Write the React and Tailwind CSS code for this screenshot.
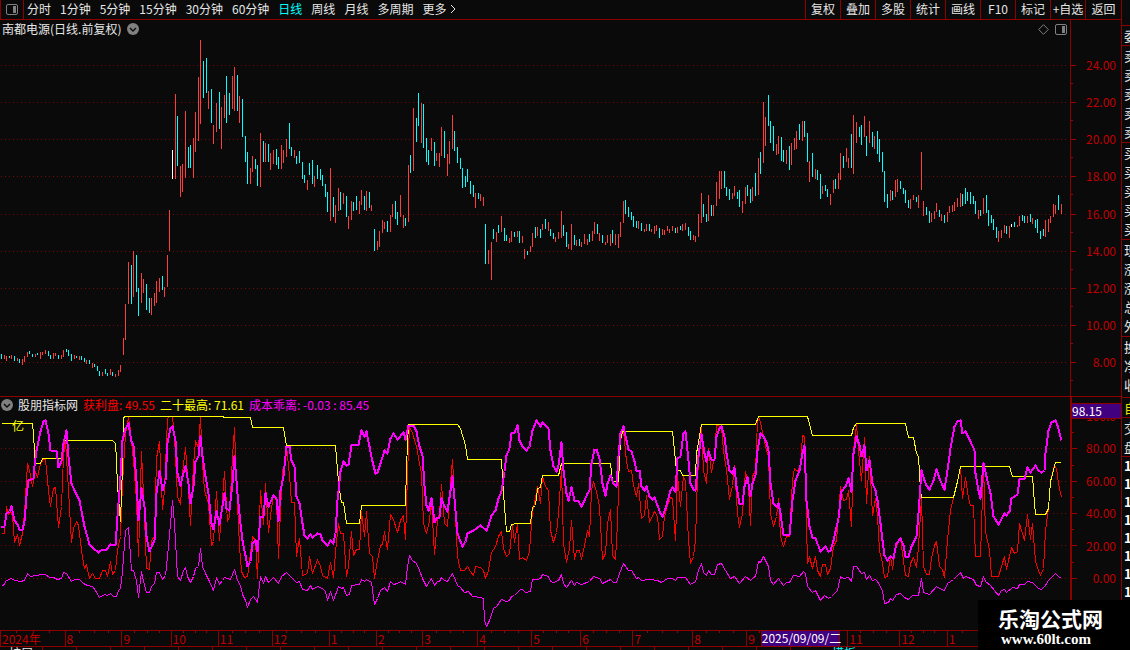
import { useState } from "react";

const PERIODS = ["分时", "1分钟", "5分钟", "15分钟", "30分钟", "60分钟", "日线", "周线", "月线", "多周期"];
const TOOLS = ["复权", "叠加", "多股", "统计", "画线", "F10", "标记", "+自选"];
const PRICES = ["24.00", "22.00", "20.00", "18.00", "16.00", "14.00", "12.00", "10.00", "8.00"];
const LEVELS = ["100.0", "80.00", "60.00", "40.00", "20.00", "0.00"];

const PRICE_ROWS = [65, 102, 139, 176, 214, 251, 288, 325, 362];
const LEVEL_ROWS = [448, 481, 513, 545, 578];

// label and the x where the month starts
const MONTHS = [
  ["2024年", 0], ["8", 65], ["9", 122], ["10", 171], ["11", 218], ["12", 272], ["1", 329],
  ["2", 376], ["3", 422], ["4", 477], ["5", 531], ["6", 580], ["7", 632], ["8", 692],
  ["9", 746], ["", 796], ["11", 847], ["12", 899], ["1", 946], ["", 1010],
];
const AXIS_END = 1070;

const TABS = [
  "窗口", "MACD", "DMI", "DMA", "FSL", "TRIX", "BRAR", "CR", "VR", "OBV", "ASI", "EMV", "VOL",
  "RSI", "WR", "SAR", "KDJ", "CCI", "ROC", "MTM", "BOLL", "PSY", "MCST",
];

// x, u/d/w (up, down, flat), high-low
const CANDLES = `
1d354-359 4u355-359 6u356-361 9d356-358 11u355-359 14d356-361 17u358-361 19d359-363 22u359-365 24u356-362
27u352-357 29d351-354 32d354-357 35u354-357 37d353-355 40u352-359 42u352-355 45u350-354 48d351-356 50d355-359
53u353-359 55u353-356 58d355-359 61u355-359 63u350-357 66d349-352 68d350-356 71d354-361 74u355-359 76d356-358
79u356-360 81d356-360 84d358-362 86u360-364 89d360-364 92u363-368 94d364-367 97d366-371 99d371-376 102u372-376
105d369-374 107d373-376 110u369-375 112d372-376 115u374-377 118u370-376 120u365-372 123u338-355 125u304-340
128u262-304 131d265-304 133u251-297 136d255-292 138d288-316 141u273-303 143u279-293 146d284-310 149d298-313
151u298-315 154u293-306 156u281-303 159u278-292 162d276-290 164u287-297 167u255-287 169u210-251 172w150-179
175u94-179 177d116-166 180u166-197 182u164-192 185u111-178 188d147-168 190d145-168 193u138-178 195u112-152
198u77-141 200u40-124 203d61-98 206d58-93 208u91-109 211d89-123 213u125-144 216u103-132 219d92-129 221u107-149
224u95-118 226d76-123 229d93-115 232u76-109 234u67-111 237d75-111 239u96-123 242d99-137 245d136-162 247d152-184
250u168-184 252u156-172 255d159-169 257d165-186 260u133-187 263d141-162 265u143-162 268d144-162 270u153-170
273u150-164 276d149-165 278d157-169 281u145-169 283u150-163 286u139-157 289d123-149 291d147-156 294u150-158
296d156-164 299d151-163 302d162-179 304d175-183 307u180-190 309d163-175 312d160-184 314u176-187 317d165-179
320d169-180 322d175-186 325d184-197 327d192-212 330u168-221 333d197-217 335u205-223 338u188-211 340d192-210
343u193-204 346d196-217 348u216-229 351u201-220 353d202-211 356d196-210 359u201-214 361u190-205 364d196-210
366u191-211 369d192-208 371u205-211 374d229-251 377u241-250 379u231-247 382u220-233 384u222-229 387d221-232
390u215-232 392u204-217 395d201-219 397d212-225 400u195-217 403u215-228 405d218-226 408u165-222 410d155-173
413u108-171 416d118-142 418d93-126 421u103-143 423d104-148 426d138-162 428d150-165 431u138-151 434d142-166
436u153-161 439u153-167 441u127-156 444d131-158 447u154-176 449u141-164 452u115-149 454d131-151 457d147-163
460d158-169 462d168-188 465d176-187 467d169-182 470d181-194 473d185-197 475u193-208 478d193-199 480u194-201
483u197-206 485d224-264 488u250-264 491u242-280 493d229-239 496u232-242 498d225-233 501u216-232 504d228-241
506d235-241 509u238-243 511u231-242 514d232-237 517u231-237 519d231-243 522u236-243 524u249-259 527d251-255
530u246-252 532u233-247 535d227-238 537u227-236 540d229-238 542u224-230 545d219-229 548u222-231 550d229-236
553d233-239 555u237-242 558u232-239 561u211-238 563d225-236 566d232-247 568u244-249 571u224-250 574d235-245
576u240-246 579d239-246 581u242-247 584u234-244 587u239-245 589d234-242 592u231-241 594u222-234 597d224-234
599u233-241 602d235-243 605u242-245 607u235-243 610u234-246 612d230-243 615u234-245 618u234-248 620u222-237
623u201-223 625d200-214 628d207-217 631d212-220 633d216-227 636d221-228 638u221-229 641d223-231 644u229-232
646u224-231 649d224-231 651u229-232 654u226-234 656u225-231 659d228-238 662u229-235 664u230-235 667u226-231
669u229-233 672u226-231 675d228-233 677u227-233 680d226-230 682u224-231 685u223-230 688d227-236 690d231-240
693u235-240 695u236-242 698u214-237 701u193-223 703d204-217 706d214-222 708u195-221 711d205-216 713u205-216
716u182-206 719u171-199 721u171-189 724d171-188 726d187-196 729d189-200 732u193-199 734u186-196 737d192-199
739d190-207 742u201-213 745u187-204 747d185-196 750d189-203 752u187-201 755d173-196 758u158-195 760d152-174
763u102-163 765u117-146 768d95-126 770d121-143 773d126-151 776u144-155 778u136-154 781d137-161 783d150-162
786u150-164 789d146-170 791u143-165 794u138-150 796u131-149 799d124-140 802u121-141 804d121-137 807d133-162
809u161-182 812d153-177 815u169-179 817d170-180 820d174-199 822u186-194 825d185-191 827d189-197 830u194-205
833u180-193 835d179-189 838u173-189 840u153-180 843d156-168 846u148-162 848u158-168 851d134-168 853u115-174
856u122-143 859d127-137 861d125-145 864u116-137 866d136-156 869u121-143 872d132-147 874u136-149 877d131-154
879d139-162 882d152-172 884d171-202 887d194-208 890u190-201 892d191-200 895u180-197 897u179-192 900d181-189
903d188-194 905d190-203 908d200-208 910u199-209 913u195-200 916d197-202 918u195-208 921u152-190 923u201-216
926d207-215 929d211-223 931u213-222 934u211-219 936u203-212 939d210-217 941u214-221 944d215-223 947u212-222
949u206-213 952u205-212 954u202-211 957u198-207 960u193-207 962d194-206 965d188-204 967d192-201 970d192-204
973d196-204 975d201-214 978u210-219 980d210-216 983u198-214 986d195-213 988d210-226 991d215-223 993d219-230
996d227-238 998u231-242 1001u230-238 1004u225-233 1006d226-234 1009u226-238 1011w224-227 1014d222-227
1017u225-227 1019u216-226 1022d215-221 1024d216-223 1027u216-223 1030d214-222 1032u218-224 1035d220-228
1037d219-233 1040d231-239 1043d229-236 1045u220-237 1048u219-232 1050u216-223 1053u204-217 1055u205-214
1058d195-210 1061u204-214`
  .trim()
  .split(/\s+/)
  .map((item) => {
    const [, x, kind, top, bottom] = item.match(/(\d+)([udw])(\d+)-(\d+)/);
    return { x: Number(x), kind, top: Number(top), bottom: Number(bottom) };
  });

const CANDLE_FILL = { u: "fill-[#ff3c3c]", d: "fill-[#00ffff]", w: "fill-white" };

// The indicator lines are kept in blocks: [first x of the block, points],
// with the points in thirds of a unit and y counted from 390.
const HIGHEST = [
  [0, "4,100 97,100 100,130 104,185 106,220 121,220 127,205 184,205 190,152 338,152 346,160 349,210 353,290 361,395 366,230 370,85 374,79 668,79 672,82 750,82 757,112 780,112"],
  [260, "70,112 80,166 226,166 236,275 241,320 243,337 250,337 260,400 298,400 305,346 436,346 440,230 445,103 593,103 602,115 615,165 622,208 724,208 728,265 732,350 739,424 748,424 755,404 768,400"],
  [520, "31,400 36,352 46,345 53,295 61,293 67,256 115,256 125,220 271,220 277,275 295,275 300,150 307,125 457,125 463,180 469,240 480,242 487,256 526,256 530,190 544,103 707,103 715,79"],
  [780, "82,79 97,136 214,136 220,112 229,100 376,100 386,142 400,143 408,190 415,200 421,300 424,322 520,322 533,275 541,230 688,230 696,259 757,259 763,340 767,373 797,373 804,355 812,275 825,218 842,217"],
];

const PROFIT = [
  [0, "4,430 13,430 19,350 25,372 31,365 37,375 43,458 52,432 58,465 67,430 73,370 82,220 88,242 97,290 106,243 112,262 121,220 130,208 136,208 145,300 151,350 160,295 166,292 175,412 184,350 190,200 197,152 205,300 214,458 220,415 229,395 235,405 244,480 253,535 259,522 268,565 277,550 286,565 298,565 307,540 316,540 322,558 331,515 338,552 346,540 353,480 361,440 367,280 376,130 385,82 391,120 400,210 408,330 415,500 424,185 432,380 438,535 447,538 454,450 463,440 469,205 477,155 487,358 493,300 502,85 508,80 517,80 524,140 532,320 541,342 548,250 556,172 564,300 571,405 580,225 587,150 595,175 601,80 608,220 612,300 625,340 634,465 640,455 649,305 658,450 666,325 673,245 681,395 688,380 697,200 703,112 710,280 718,470 725,545 734,562 742,560 750,490 757,440 765,450 772,565 781,300"],
  [260, "10,403 16,280 25,427 34,355 40,312 48,330 55,505 60,360 66,240 72,230 80,170 88,255 94,337 103,338 109,500 118,445 127,555 142,550 149,498 157,550 172,507 181,528 187,555 202,565 211,517 220,562 229,455 235,400 242,430 250,430 259,560 266,530 274,425 281,495 290,477 298,478 305,365 313,438 320,365 328,490 336,500 344,565 352,510 360,465 367,462 374,425 382,478 391,373 400,388 413,427 422,390 430,377 437,448 441,250 447,110 458,130 470,170 478,220 485,250 491,400 500,430 508,390 515,330 523,493 531,390 538,370 544,283 553,400 562,408 570,280 578,208 585,380 593,500 602,540 614,540 622,528 632,545 640,555 647,528 662,532 670,540 677,565 685,540 694,488 707,470 716,440 724,425 731,475 740,500 747,490 757,405 764,458 772,403 779,508"],
  [520, "7,502 20,512 29,485 36,360 44,340 52,290 61,340 68,260 75,290 85,300 92,420 100,457 109,428 116,370 124,235 131,460 140,518 147,475 154,390 163,508 170,482 178,482 185,507 194,465 203,420 208,438 214,300 221,275 229,305 238,350 248,508 255,490 262,400 271,358 277,495 286,508 292,400 298,200 305,130 310,122 319,215 325,245 334,240 341,285 349,320 356,280 365,385 373,375 380,315 389,397 404,365 412,380 419,447 427,440 434,380 443,345 450,322 457,325 466,450 473,255 481,350 489,260 496,275 504,450 512,520 520,500 527,450 533,260 543,105 551,240 559,280 566,175 575,248 582,200 590,105 603,108 610,180 619,240 628,328 636,285 643,225 651,370 659,412 668,370 677,245 684,290 691,405 698,260 706,240 713,90 718,85 730,140 738,180 745,200 752,370 760,408 768,380 775,325"],
  [780, "2,440 10,470 20,440 29,440 36,270 44,235 52,245 60,225 68,137 74,138 79,400 83,520 89,500 97,535 105,500 113,540 121,558 128,523 136,523 143,552 151,535 160,470 168,450 175,380 182,290 190,330 199,328 206,300 214,410 221,180 229,102 236,180 244,272 254,143 260,340 268,198 278,375 285,325 291,380 299,480 307,520 314,562 321,558 330,500 338,538 346,475 354,450 361,445 368,490 376,555 384,558 392,520 400,503 409,533 415,470 424,325 431,530 440,552 447,552 455,505 462,465 469,455 477,530 486,538 494,562 502,450 512,360 525,300 533,275 541,230 548,325 556,262 565,325 572,345 580,345 586,498 602,500 610,225 617,425 627,480 634,560 655,560 663,530 672,500 680,538 695,472 703,490 712,485 719,400 727,430 733,450 742,373 751,448 758,400 766,515 774,540 782,555 790,535 797,420 806,355 812,275 822,225 830,235 836,280 844,322"],
];

const TREND = [
  [0, "4,411 13,410 19,370 28,365 34,350 43,392 52,402 58,418 67,418 73,395 79,320 85,272 99,265 104,230 110,180 121,125 130,95 136,92 145,130 150,180 168,180 176,232 185,215 190,160 199,120 206,200 214,280 222,300 238,330 246,380 254,410 268,462 280,475 296,488 307,478 320,478 331,463 345,467 352,380 360,260 368,150 376,115 385,100 393,155 401,165 408,270 415,392 425,295 432,350 440,440 448,485 456,462 463,450 470,310 478,245 487,300 495,270 503,160 511,115 518,108 526,150 533,250 541,285 548,260 556,230 564,280 571,340 579,290 586,215 595,200 602,140 608,200 617,260 625,310 633,400 640,418 649,365 658,403 666,350 673,310 680,355 689,362 697,280 704,200 712,310 720,400 727,450 735,495 742,530 750,515 757,460 766,450 772,485 780,380"],
  [260, "10,380 16,310 25,350 40,315 48,325 55,395 62,300 70,260 78,170 88,170 95,210 103,230 109,320 118,340 127,400 133,435 142,445 150,432 158,442 172,430 180,432 187,450 202,467 211,450 220,460 227,430 233,330 242,245 250,215 258,225 265,222 273,165 296,162 304,120 313,140 320,125 328,170 336,215 345,250 352,248 360,220 373,180 382,190 390,145 400,130 413,148 429,127 437,148 445,105 460,105 470,125 478,170 486,195 493,285 500,345 506,360 514,325 523,398 530,385 538,382 545,325 553,350 562,365 570,300 578,260 585,360 592,430 600,455 608,470 616,455 623,430 640,420 660,405 678,422 686,405 695,375 705,360 715,325 725,305 732,245 740,195 747,175 753,130 763,128 771,105 779,150"],
  [520, "8,168 20,180 29,170 37,122 50,92 60,108 68,97 78,108 86,115 92,180 100,230 108,243 116,225 124,157 131,240 140,310 145,330 154,292 163,330 175,335 185,348 194,330 203,310 209,300 215,220 222,177 230,177 238,205 247,280 256,315 263,280 271,255 280,280 288,290 294,200 301,130 310,108 318,150 326,178 334,185 342,215 350,240 357,242 365,290 372,302 380,290 389,320 397,328 404,322 412,345 420,370 428,380 435,355 443,335 450,300 458,292 466,305 473,205 482,200 489,130 497,123 504,210 511,280 520,297 527,300 534,195 544,133 552,190 559,215 566,185 574,207 582,207 590,140 597,115 604,110 612,140 620,190 628,240 636,250 643,232 650,290 658,340 668,342 674,290 683,262 691,320 698,280 706,255 713,180 722,130 730,138 738,158 745,180 752,280 760,340 768,350 776,340"],
  [780, "0,370 10,432 29,437 36,330 45,270 57,240 66,190 74,165 80,330 88,410 98,442 106,445 122,483 136,470 144,483 152,480 160,450 175,385 183,305 195,288 205,265 214,305 221,190 229,140 237,165 244,200 253,165 260,240 268,210 277,280 285,300 293,330 300,400 306,450 313,495 323,512 331,500 340,505 348,460 360,445 370,465 376,498 385,498 393,470 410,440 416,370 424,240 432,270 440,285 449,297 460,270 469,238 478,265 486,285 494,297 502,240 512,175 522,110 533,95 541,90 548,130 556,125 570,155 582,180 587,250 595,300 601,325 610,220 618,260 630,310 639,380 655,402 672,370 680,375 688,365 695,325 711,312 718,268 734,266 741,232 750,248 765,225 775,240 785,248 792,240 797,190 806,120 815,98 825,90 833,105 844,150"],
];

const DEVIATION = [
  [0, "4,585 10,585 19,570 34,566 43,572 61,574 73,571 82,550 91,560 106,556 130,553 136,553 148,562 160,563 172,568 184,565 190,547 199,550 214,574 223,568 238,569 250,580 262,585 277,590 286,600 298,622 313,612 322,617 331,610 340,620 349,618 355,602 361,595 368,545 375,420 385,412 394,540 400,542 408,570 415,622 424,545 432,585 440,607 448,606 455,588 463,580 469,548 477,548 488,568 496,555 503,500 510,400 517,332 524,400 532,560 541,570 550,540 556,532 563,560 572,577 580,560 587,535 595,530 602,475 608,530 615,550 625,568 640,600 649,563 658,583 666,572 673,562 690,568 703,538 712,570 720,585 727,612 735,630 742,652 752,628 760,620 772,637 781,560"],
  [260, "10,580 16,560 25,577 40,563 55,580 65,560 80,547 90,560 103,570 110,577 118,573 127,598 142,600 150,587 158,598 172,590 187,595 195,605 202,630 211,605 220,630 235,588 243,595 250,592 260,617 267,612 274,585 298,583 305,568 312,575 320,568 334,578 344,642 352,625 360,602 374,593 382,604 391,575 400,583 413,580 422,573 437,583 441,530 447,497 458,510 470,520 478,540 488,565 500,588 508,575 515,566 523,585 531,573 538,575 544,563 553,572 562,573 570,560 578,550 585,570 593,585 602,592 612,606 625,605 638,618 662,622 670,625 674,690 678,708 688,690 700,655 709,650 724,627 740,635 748,632 755,618 764,617 780,598"],
  [520, "8,598 16,607 30,605 37,568 52,567 60,565 68,553 85,560 92,573 100,577 116,572 124,552 131,580 140,592 154,570 163,585 170,578 185,582 208,573 221,560 238,565 248,580 271,568 280,577 290,577 298,550 310,520 325,540 334,542 349,565 356,562 365,572 389,567 412,570 425,576 443,566 458,565 466,571 473,562 497,562 512,583 527,575 535,540 544,521 551,548 559,556 566,542 575,554 582,552 591,524 604,520 617,540 630,565 643,558 659,579 677,560 691,572 700,562 706,560 716,515 722,518 730,500 745,530 752,570 761,582 775,565"],
  [780, "0,573 10,585 20,578 29,577 40,556 57,558 70,545 75,550 83,588 97,607 107,600 122,632 132,617 145,625 155,620 172,602 181,558 190,565 205,562 214,575 221,530 230,530 244,550 253,547 260,567 268,555 277,570 285,568 293,575 306,602 314,640 324,637 331,625 338,632 350,612 361,610 374,622 384,628 398,617 415,615 424,565 431,607 449,612 468,590 485,597 494,600 502,580 520,568 541,547 549,565 556,560 580,568 588,585 601,588 610,560 617,573 632,585 655,615 663,602 673,597 680,607 697,592 711,595 718,582 733,583 742,575 758,577 775,595 785,598 795,587 804,572 825,550 835,560 844,564"],
];

function toPoints(blocks) {
  return blocks
    .flatMap(([start, text]) =>
      text.split(" ").map((pair) => {
        const [x, y] = pair.split(",").map(Number);
        return `${start + Math.floor(x / 3) + 0.5},${390 + Math.floor(y / 3) + 0.5}`;
      })
    )
    .join(" ");
}

function Line({ blocks, className }) {
  return <polyline points={toPoints(blocks)} fill="none" strokeLinejoin="round" className={className} />;
}

function GridLines({ rows }) {
  return rows.map((y) => (
    <path key={y} d={`M1 ${y + 0.5}H1069`} strokeDasharray="1 3" className="stroke-[#780808]" />
  ));
}

function AxisTicks({ rows, step, viewBox }) {
  return (
    <svg viewBox={viewBox} preserveAspectRatio="none" shapeRendering="crispEdges" className="h-full w-[5px] shrink-0">
      {rows.map((y) => (
        <path key={y} d={`M0 ${y + 0.5}H5M0 ${y + step + 0.5}H2`} className="stroke-[#a00000]" />
      ))}
    </svg>
  );
}

function PanelIcon({ className }) {
  return (
    <svg viewBox="0 0 12 11" className={className} fill="none">
      <rect x="0.5" y="0.5" width="11" height="10" rx="1.5" stroke="#808080" />
      <rect x="7" y="2" width="3" height="7" fill="#808080" />
    </svg>
  );
}

function RoundChevron() {
  return (
    <svg viewBox="0 0 12 12" className="h-3 w-3">
      <circle cx="6" cy="6" r="6" fill="#808080" />
      <path d="M3 5l3 3 3-3" fill="none" stroke="#0a0a0a" strokeWidth="1.4" />
    </svg>
  );
}

function Toolbar({ period, onPeriod }) {
  return (
    <header className="flex h-5 shrink-0 items-stretch border-b border-[#8c0000]">
      <button type="button" aria-label="侧栏" className="flex w-6 items-center justify-center border-x border-[#8c0000]">
        <PanelIcon className="h-[11px] w-3" />
      </button>
      <nav className="flex flex-1 items-start gap-[9px] pl-[3px] leading-[18px]">
        {PERIODS.map((name) => (
          <button
            key={name}
            type="button"
            onClick={() => onPeriod(name)}
            className={name === period ? "text-[#00ffff]" : "text-[#e6e6e6]"}
          >
            {name}
          </button>
        ))}
        <button type="button" className="flex items-center gap-1">
          更多
          <svg viewBox="0 0 6 10" className="h-[10px] w-[6px]" fill="none" stroke="#e6e6e6">
            <path d="M1 1l4 4-4 4" />
          </svg>
        </button>
      </nav>
      {TOOLS.map((name) => (
        <button
          key={name}
          type="button"
          className="w-[35px] border-l border-[#8c0000] pb-px leading-[18px] whitespace-nowrap"
        >
          {name}
        </button>
      ))}
      <button type="button" className="w-9 border-l border-[#8c0000] pb-px leading-[18px]">
        返回
      </button>
    </header>
  );
}

function PriceChart() {
  return (
    <section className="flex min-h-0 flex-[376_1_0%] border-b border-[#8c0000]">
      <div className="relative min-w-0 flex-1">
        <svg
          viewBox="0 20 1070 376"
          preserveAspectRatio="none"
          shapeRendering="crispEdges"
          className="absolute inset-0 h-full w-full"
        >
          <GridLines rows={PRICE_ROWS} />
          {CANDLES.map((c) => (
            <rect key={c.x} x={c.x} y={c.top} width="1" height={c.bottom - c.top} className={CANDLE_FILL[c.kind]} />
          ))}
        </svg>
        <div className="relative flex h-[18px] items-center gap-[6px] pr-[3px] pl-[2px]">
          <h1>南都电源(日线.前复权)</h1>
          <button type="button" aria-label="展开">
            <RoundChevron />
          </button>
          <button type="button" aria-label="标注" className="ml-auto">
            <svg viewBox="0 0 11 11" className="h-[11px] w-[11px]" fill="none" stroke="#808080">
              <path d="M5.5 .7l4.8 4.8-4.8 4.8L.7 5.5z" />
            </svg>
          </button>
          <button type="button" aria-label="面板">
            <PanelIcon className="h-[11px] w-3" />
          </button>
        </div>
      </div>
      <div className="flex w-[51px] border-l border-[#8c0000]">
        <AxisTicks rows={PRICE_ROWS} step={18} viewBox="0 20 5 376" />
        <ul className="flex flex-1 flex-col justify-between pt-[39px] pr-[5px] pb-7 text-right leading-3 text-[#c00000]">
          {PRICES.map((price) => (
            <li key={price}>{price}</li>
          ))}
        </ul>
      </div>
    </section>
  );
}

function IndicatorChart() {
  return (
    <section className="flex min-h-0 flex-[233_1_0%]">
      <div className="relative min-w-0 flex-1">
        <svg
          viewBox="0 397 1070 233"
          preserveAspectRatio="none"
          shapeRendering="crispEdges"
          className="absolute inset-0 h-full w-full"
        >
          <GridLines rows={LEVEL_ROWS} />
          <Line blocks={PROFIT} className="stroke-[#ff0000]" />
          <Line blocks={HIGHEST} className="stroke-[#ffff00]" />
          <Line blocks={DEVIATION} className="stroke-[#ff00ff]" />
          <Line blocks={TREND} className="stroke-[#ff00ff] stroke-2" />
        </svg>
        <div className="relative flex h-4 items-center gap-[5px] pl-px leading-4 whitespace-pre">
          <button type="button" aria-label="指标菜单">
            <RoundChevron />
          </button>
          <span>股朋指标网</span>
          <span className="text-[#ff0000]">获利盘: 49.55</span>
          <span className="text-[#ffff00]">二十最高: 71.61</span>
          <span className="text-[#ff00ff]">成本乖离: -0.03 : 85.45</span>
        </div>
        <span className="absolute top-5 left-3 text-[#ffff00]">亿</span>
      </div>
      <div className="relative flex w-[51px] border-l-2 border-[#8c0000]">
        <AxisTicks rows={LEVEL_ROWS} step={-16} viewBox="0 397 5 233" />
        <ul className="flex flex-1 flex-col justify-between pt-[13px] pr-[5px] pb-[46px] text-right leading-3 text-[#c00000]">
          {LEVELS.map((level) => (
            <li key={level}>{level}</li>
          ))}
        </ul>
        <output className="absolute inset-x-0 top-[6px] h-4 border-y border-[#8c0000] bg-[#400080] leading-[14px] text-white">
          98.15
        </output>
      </div>
    </section>
  );
}

function DateAxis() {
  const months = MONTHS.map(([label, x], i) => ({ label, x, width: (MONTHS[i + 1]?.[1] ?? AXIS_END) - x }));

  return (
    <div className="flex h-[17px] shrink-0 border-y border-[#8c0000]">
      <div className="relative flex min-w-0 flex-1">
        <svg
          viewBox="0 0 1070 2"
          preserveAspectRatio="none"
          shapeRendering="crispEdges"
          className="absolute inset-x-0 top-0 h-[2px] w-full"
        >
          {months.map(({ x, width }) =>
            [1, 2, 3].map((n) => (
              <rect key={`${x}-${n}`} x={Math.round(x + (width * n) / 4)} width="1" height="2" fill="#a00000" />
            ))
          )}
        </svg>
        {months.map(({ label, x, width }) => (
          <span
            key={x}
            style={{ flexGrow: width }}
            className="basis-0 border-l border-[#8c0000] pl-px leading-[15px] whitespace-nowrap text-[#c00000] first:border-l-0"
          >
            {label}
          </span>
        ))}
        <time
          dateTime="2025-09-09"
          className="absolute inset-y-0 left-[71.1%] w-[79px] border-x border-[#8c0000] bg-[#400080] text-center leading-[14px] whitespace-nowrap text-white"
        >
          2025/09/09/二
        </time>
      </div>
      <div className="w-[51px] border-l border-[#8c0000]" />
    </div>
  );
}

function BottomTabs() {
  return (
    <div className="flex h-[3px] shrink-0 overflow-hidden leading-3">
      <button type="button" className="w-[42px] shrink-0">
        扩展
      </button>
      {TABS.map((name) => (
        <button
          key={name}
          type="button"
          aria-label={name}
          className="w-[34px] shrink-0 border-l border-[#8c0000] last:border-r"
        />
      ))}
      <button type="button" className="ml-2 shrink-0 text-[#00ffff]">
        模板
      </button>
    </div>
  );
}

function SideGroup({ items, className }) {
  return (
    <ul className={className}>
      {items.map((item, i) => (
        <li key={i}>{item}</li>
      ))}
    </ul>
  );
}

function QuoteSidebar() {
  return (
    <aside className="w-[9px] shrink-0 overflow-hidden border-l border-[#8c0000] pt-[25px] text-[13px]">
      <div className="w-5 divide-y divide-[#8c0000] border-t border-[#8c0000] leading-[19px] *:pl-[2px]">
        <SideGroup items={["委"]} />
        <SideGroup items={["卖", "卖", "卖", "卖", "卖"]} className="pb-px" />
        <SideGroup items={["买", "买", "买", "买", "买"]} className="pb-px" />
        <SideGroup items={["现", "涨", "涨", "总", "外"]} className="pb-px" />
        <SideGroup items={["换", "净", "收"]} className="pb-[3px]" />
        <SideGroup items={["自"]} className="text-[#e6e600]" />
        <SideGroup items={["交", "盘"]} />
        <SideGroup
          items={["1", "1", "1", "1", "1", "1", "1", "1"]}
          className="leading-[18px] font-bold text-white"
        />
      </div>
    </aside>
  );
}

export default function App() {
  const [period, setPeriod] = useState("日线");

  return (
    <div className="relative flex h-screen overflow-hidden bg-[#0a0a0a] font-['Noto_Sans_CJK_SC',sans-serif] text-[12px] text-[#e6e6e6]">
      <main className="flex min-w-0 flex-1 flex-col">
        <Toolbar period={period} onPeriod={setPeriod} />
        <PriceChart />
        <IndicatorChart />
        <DateAxis />
        <BottomTabs />
      </main>
      <QuoteSidebar />
      <footer className="absolute right-0 bottom-0 h-[50px] w-[152px] bg-black pt-[5px] pl-5 font-bold text-white">
        <p className="text-[21px] leading-[26px]">乐淘公式网</p>
        <p className="pl-[3px] font-['Liberation_Serif',serif] text-[15px] leading-4">www.60lt.com</p>
      </footer>
    </div>
  );
}
